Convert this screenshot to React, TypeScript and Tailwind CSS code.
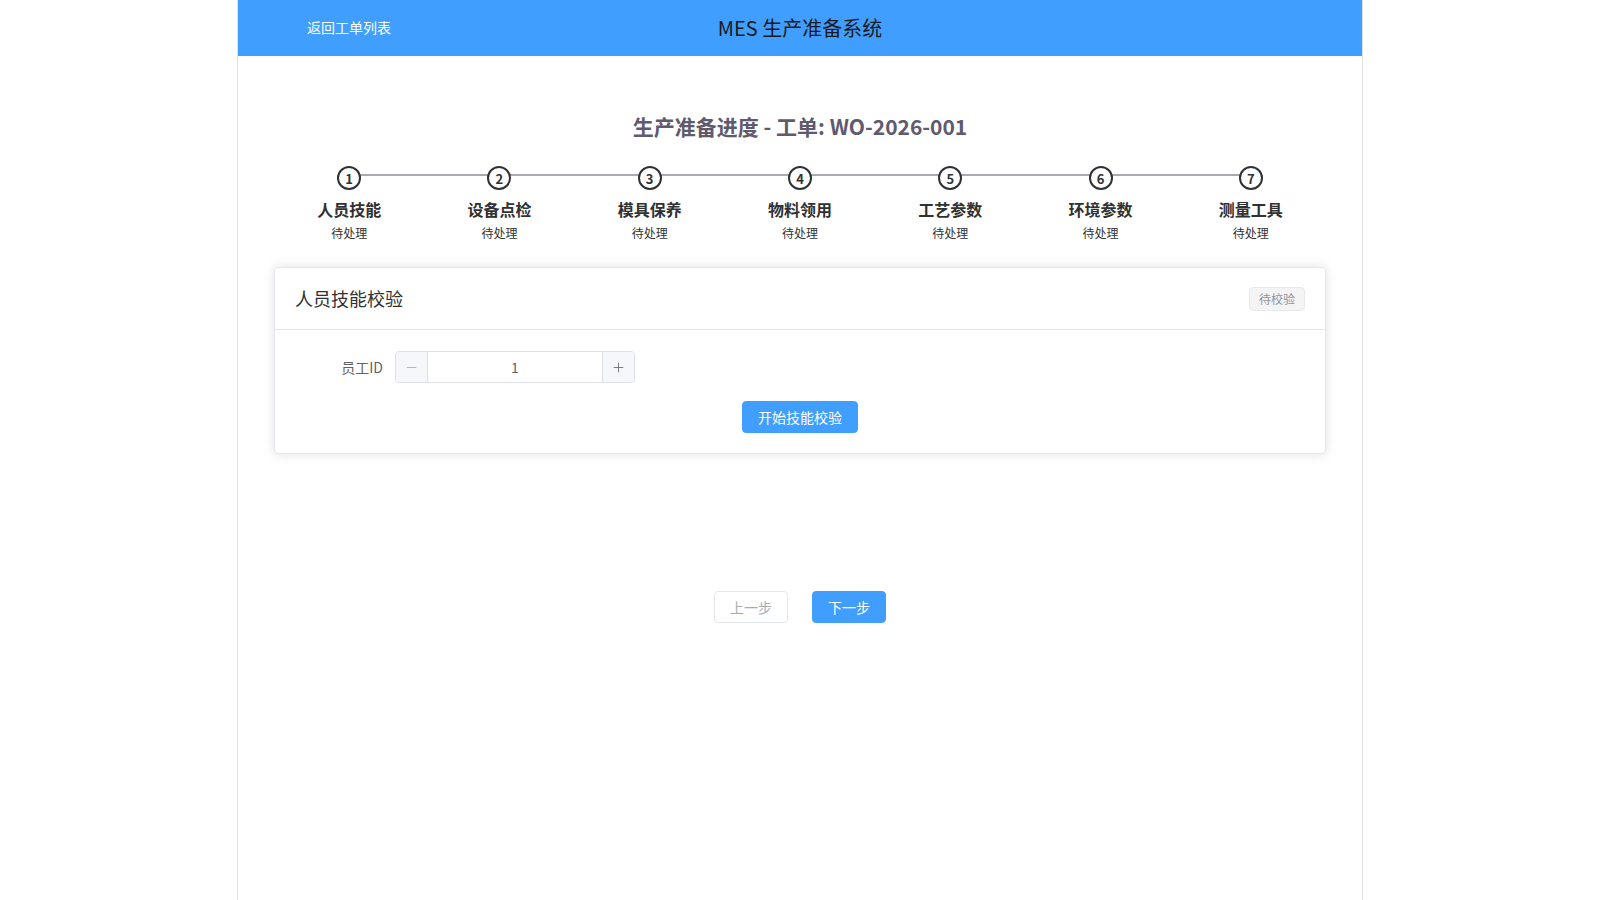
import React from 'react';
import { Minus, Plus } from 'lucide-react';

const steps = [
  { title: '人员技能', status: '待处理' },
  { title: '设备点检', status: '待处理' },
  { title: '模具保养', status: '待处理' },
  { title: '物料领用', status: '待处理' },
  { title: '工艺参数', status: '待处理' },
  { title: '环境参数', status: '待处理' },
  { title: '测量工具', status: '待处理' },
];

function StepBar() {
  return (
    <div className="mt-[26px] grid grid-cols-7">
      {steps.map((step, i) => (
        <div key={step.title} className="flex flex-col items-center">
          <div className="relative flex h-6 w-full justify-center">
            {i < steps.length - 1 && (
              <div className="absolute left-1/2 top-[8px] h-[2px] w-full bg-[#a8abb2]" />
            )}
            <div className="relative z-10 flex h-6 w-6 items-center justify-center rounded-full border-2 border-[#303133] bg-white text-[13px] font-bold leading-none text-[#303133]">
              {i + 1}
            </div>
          </div>
          <div className="mt-[7px] text-base font-bold leading-6 text-[#303133]">{step.title}</div>
          <div className="mt-[2px] text-xs leading-5 text-[#303133]">{step.status}</div>
        </div>
      ))}
    </div>
  );
}

function SkillCard() {
  return (
    <div className="mt-6 rounded border border-[#e4e7ed] bg-white shadow-[0_0_12px_rgba(0,0,0,0.12)]">
      <div className="flex h-[62px] items-center justify-between border-b border-[#e4e7ed] px-5">
        <span className="text-[18px] text-[#303133]">人员技能校验</span>
        <span className="flex h-6 items-center rounded border border-[#e9e9eb] bg-[#f4f4f5] px-[9px] text-xs text-[#909399]">
          待校验
        </span>
      </div>
      <div className="px-5 pb-5 pt-[21px]">
        <div className="flex items-center">
          <label className="w-[100px] pr-3 text-right text-sm text-[#606266]">员工ID</label>
          <div className="flex h-8 w-[240px] overflow-hidden rounded border border-[#dcdfe6]">
            <button className="flex w-8 items-center justify-center border-r border-[#dcdfe6] bg-[#f5f7fa] text-[#a8abb2]">
              <Minus size={15} strokeWidth={1.3} />
            </button>
            <div className="flex flex-1 items-center justify-center text-sm text-[#606266]">1</div>
            <button className="flex w-8 items-center justify-center border-l border-[#dcdfe6] bg-[#f5f7fa] text-[#606266]">
              <Plus size={15} strokeWidth={1.3} />
            </button>
          </div>
        </div>
        <div className="mt-[18px] flex justify-center">
          <button className="h-8 rounded border border-[#409eff] bg-[#409eff] px-[15px] text-sm text-white">
            开始技能校验
          </button>
        </div>
      </div>
    </div>
  );
}

export default function App() {
  return (
    <div className="min-h-screen bg-white font-['Noto_Sans_CJK_SC',sans-serif]">
      <div className="mx-auto min-h-screen w-[1126px] border-x border-[#dcdfe6]">
        <header className="grid h-14 grid-cols-[1fr_auto_1fr] items-center bg-[#409eff]">
          <div className="pb-[5px] pl-[69px]">
            <span className="text-sm text-white">返回工单列表</span>
          </div>
          <h1 className="text-[20px] text-[#1a1a1a]">MES 生产准备系统</h1>
          <div />
        </header>

        <main className="px-9">
          <h2 className="mt-[56px] text-center text-[21px] font-bold leading-7 text-[#605a6e]">
            生产准备进度 - 工单: WO-2026-001
          </h2>

          <StepBar />

          <SkillCard />

          <div className="mt-[137px] flex justify-center gap-6">
            <button disabled className="h-8 rounded border border-[#e4e7ed] bg-white px-[15px] text-sm text-[#a8abb2]">
              上一步
            </button>
            <button className="h-8 rounded border border-[#409eff] bg-[#409eff] px-[15px] text-sm text-white">
              下一步
            </button>
          </div>
        </main>
      </div>
    </div>
  );
}
